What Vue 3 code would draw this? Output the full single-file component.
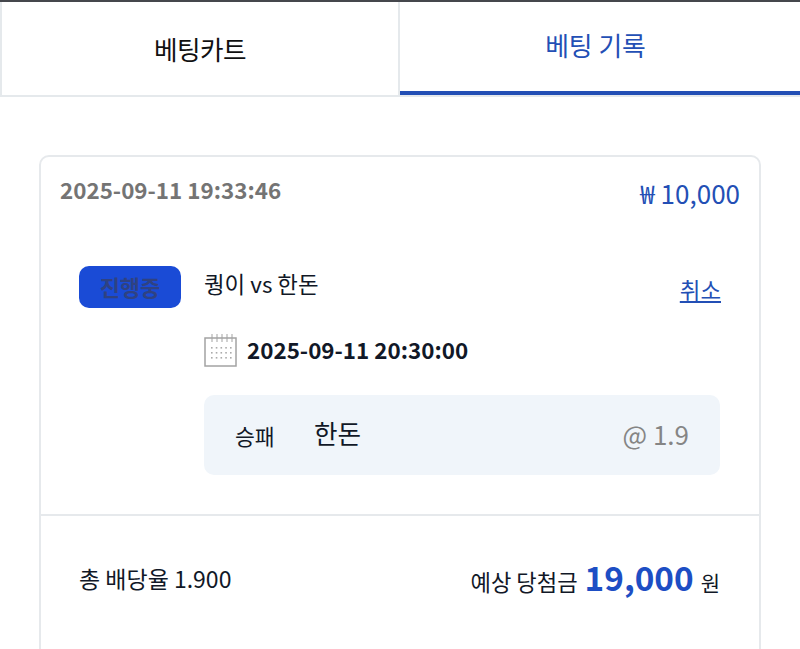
<script setup>
const dots = Array.from({ length: 15 }, (_, i) => ({ x: 7 + (i % 5) * 4.75, y: 13 + Math.floor(i / 5) * 5 }))
</script>

<template>
  <div class="page">
    <div class="topline"></div>
    <div class="tabs">
      <div class="tab first">베팅카트</div>
      <div class="tab active">베팅 기록</div>
    </div>
    <div class="card">
      <div class="card-head">
        <span class="stamp">2025-09-11 19:33:46</span>
        <span class="stake">₩ 10,000</span>
      </div>
      <div class="body">
        <div class="badge">진행중</div>
        <div class="main">
          <div class="match-row">
            <span class="match">퀑이 vs 한돈</span>
            <a class="cancel">취소</a>
          </div>
          <div class="date-row">
            <svg class="cal" width="34" height="34" viewBox="0 0 34 34" fill="none">
              <rect x="1" y="4" width="31" height="28" fill="#fff" stroke="#a3a3a3" stroke-width="1.5" />
              <path d="M8 0v8M13 0v8M18 0v8M23 0v8M28 0v8" stroke="#a3a3a3" stroke-width="1" />
              <rect v-for="d in dots" :key="d.x + '-' + d.y" :x="d.x" :y="d.y" width="1.6" height="1.6" fill="#ababab" />
            </svg>
            <span class="date">2025-09-11 20:30:00</span>
          </div>
          <div class="pick">
            <span class="market">승패</span>
            <span class="team">한돈</span>
            <span class="odds">@ 1.9</span>
          </div>
        </div>
      </div>
      <div class="foot">
        <span class="total">총 배당율 1.900</span>
        <span class="win"><span>예상 당첨금</span><b>19,000</b><i>원</i></span>
      </div>
    </div>
  </div>
</template>

<style>
html, body { margin: 0; background: #fff; overflow: hidden; }
</style>

<style scoped>
.page { width: 800px; height: 649px; overflow: hidden; font-family: "Noto Sans CJK KR", sans-serif; color: #111827; background: #fff; box-sizing: border-box; }
.topline { height: 2px; background: #45474c; }
.tabs { display: flex; height: 95px; border-bottom: 2px solid #e5e9ec; box-sizing: border-box; }
.tab { width: 400px; display: flex; align-items: center; justify-content: center; box-sizing: border-box; line-height: 36px; }
.first { border-left: 2px solid #e5e9ec; border-right: 2px solid #e5e9ec; color: #111; font-size: 25.6px; letter-spacing: -0.5px; }
.active { color: #234fb5; border-bottom: 4px solid #234fb5; padding: 0 9px 4px 0; font-size: 25.8px; }
.card { margin: 58px 39px 0 39px; border: 2px solid #e6e9ec; border-radius: 10px; height: 520px; box-sizing: border-box; }
.card-head { display: flex; justify-content: space-between; align-items: flex-start; padding: 16px 19px 0 19px; height: 73px; box-sizing: border-box; }
.stamp { font-size: 22.4px; font-weight: 700; color: #747474; line-height: 32px; }
.stake { font-size: 26px; color: #234fb5; line-height: 40px; }
.body { display: flex; padding: 36px 39px 39px 38px; border-bottom: 2px solid #e6e9ec; }
.badge { width: 102px; height: 42px; border-radius: 10px; background: #1a4bd6; color: #2f4282; font-size: 22px; font-weight: 700; display: flex; align-items: center; justify-content: center; flex: none; padding-bottom: 3px; box-sizing: border-box; }
.main { flex: 1; margin-left: 23px; }
.match-row { display: flex; justify-content: space-between; align-items: flex-start; height: 66px; }
.match { font-size: 22.4px; line-height: 38px; margin-top: -2px; }
.cancel { font-size: 22.4px; color: #234fb5; text-decoration: underline; line-height: 38px; margin: 4px -1px 0 0; }
.date-row { display: flex; align-items: center; gap: 9px; height: 38px; margin-bottom: 25px; }
.date { font-size: 22.4px; font-weight: 700; padding-bottom: 5px; }
.pick { display: flex; align-items: center; height: 80px; background: #f0f5fa; border-radius: 10px; padding: 0 31px; }
.market { font-size: 21.6px; width: 79px; }
.team { font-size: 25.6px; flex: 1; padding-bottom: 6px; }
.odds { font-size: 26px; color: #858585; padding-bottom: 4px; }
.foot { display: flex; justify-content: space-between; align-items: center; padding: 27px 39px 0 38px; height: 70px; }
.total { font-size: 23px; }
.win { font-size: 22.2px; padding-bottom: 4px; display: flex; align-items: baseline; }
.win b { font-size: 33.3px; color: #1d4ec4; font-weight: 700; margin: 0 7px 0 7px; }
.win i { font-style: normal; font-size: 21px; }
</style>
